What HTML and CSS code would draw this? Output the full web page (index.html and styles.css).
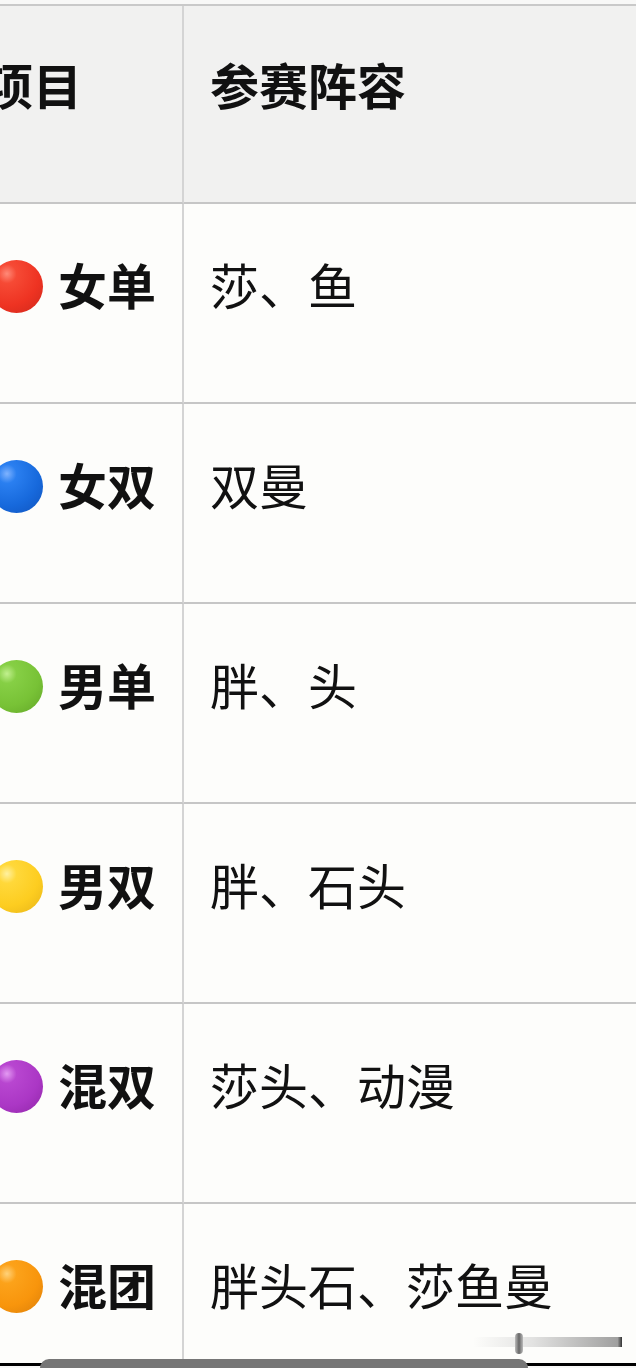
FILE: index.html
```html
<!DOCTYPE html>
<html lang="zh-CN">
<head>
<meta charset="utf-8">
<title>参赛阵容</title>
<link rel="stylesheet" href="styles.css">
</head>
<body>
<div class="page">
  <div class="table">
    <div class="cell head left"><span class="label">项目</span></div>
    <div class="cell head right"><span class="label">参赛阵容</span></div>

    <div class="cell left"><div class="cat"><span class="dot red"></span><span class="name">女单</span></div></div>
    <div class="cell right"><span class="value">莎、鱼</span></div>

    <div class="cell left"><div class="cat"><span class="dot blue"></span><span class="name">女双</span></div></div>
    <div class="cell right"><span class="value">双曼</span></div>

    <div class="cell left"><div class="cat"><span class="dot green"></span><span class="name">男单</span></div></div>
    <div class="cell right"><span class="value">胖、头</span></div>

    <div class="cell left"><div class="cat"><span class="dot yellow"></span><span class="name">男双</span></div></div>
    <div class="cell right"><span class="value">胖、石头</span></div>

    <div class="cell left"><div class="cat"><span class="dot purple"></span><span class="name">混双</span></div></div>
    <div class="cell right"><span class="value">莎头、动漫</span></div>

    <div class="cell left last"><div class="cat"><span class="dot orange"></span><span class="name">混团</span></div></div>
    <div class="cell right last"><span class="value">胖头石、莎鱼曼</span></div>
  </div>
  <div class="sysbar"></div>
  <div class="handle"></div>
  <div class="watermark"><span class="mark"></span></div>
</div>
</body>
</html>
```

FILE: styles.css
```css
html, body {
  margin: 0;
  padding: 0;
  background: #f8f8f7;
}

.page {
  position: relative;
  width: 636px;
  height: 1368px;
  overflow: hidden;
  padding-top: 4px;
  box-sizing: border-box;
  font-family: "Noto Sans CJK SC", "Noto Sans", sans-serif;
  color: #111;
}

.table {
  display: grid;
  grid-template-columns: 232px 1fr;
  margin-left: -48px;
  border-top: 2px solid #c9c9c9;
}

.cell {
  height: 200px;
  box-sizing: border-box;
  border-bottom: 2px solid #c6c6c6;
  background: #fdfdfb;
  padding-top: 55px;
  font-size: 49px;
  line-height: 50px;
  white-space: nowrap;
}

.cell.head {
  height: 198px;
  background: #f1f1f0;
  font-weight: 700;
  padding-top: 53px;
}

.cell.left {
  border-right: 2px solid #d4d4d4;
}

.head.left {
  padding-left: 32px;
}

.cell.right {
  padding-left: 26px;
}

.cell.last {
  height: 159px;
  border-bottom: none;
}

.cat {
  display: flex;
  align-items: center;
  height: 50px;
  padding-left: 38px;
}

.name {
  font-weight: 700;
  margin-left: 15px;
}

.value {
  font-weight: 400;
}

.dot {
  flex: none;
  width: 53px;
  height: 53px;
  border-radius: 50%;
  margin-top: 4px;
  box-sizing: border-box;
}

.dot.red {
  background: radial-gradient(circle at 32% 26%, #ff8a78 0, #f64a35 18%, #ee3322 60%, #d42a1c 92%, #c2261a 100%);
}
.dot.blue {
  background: radial-gradient(circle at 32% 26%, #7fb3ff 0, #2a7ff0 18%, #1769dc 60%, #1157c2 92%, #0e4da9 100%);
}
.dot.green {
  background: radial-gradient(circle at 32% 26%, #c2f08f 0, #86cf45 18%, #78c236 60%, #66ab2a 92%, #5a9a25 100%);
}
.dot.yellow {
  background: radial-gradient(circle at 32% 26%, #fff1a0 0, #ffd83a 18%, #fdcd20 60%, #eab81a 92%, #d9a715 100%);
}
.dot.purple {
  background: radial-gradient(circle at 32% 26%, #e39af2 0, #b846d0 18%, #ab37c5 60%, #9529ad 92%, #84219a 100%);
}
.dot.orange {
  background: radial-gradient(circle at 32% 26%, #ffd27a 0, #fca21a 18%, #f8950c 60%, #e0820a 92%, #cc7408 100%);
}

.sysbar {
  height: 3px;
  background: #000;
}

.handle {
  position: absolute;
  left: 40px;
  bottom: 0;
  width: 488px;
  height: 9px;
  background: #767676;
  border-radius: 9px 9px 0 0;
}

.watermark {
  position: absolute;
  right: 14px;
  bottom: 21px;
  width: 149px;
  height: 10px;
  background: linear-gradient(to right, rgba(200,200,200,0) 0, rgba(200,200,200,0.5) 40%, rgba(120,120,120,0.7) 97%, #333 100%);
}

.mark {
  position: absolute;
  left: 42px;
  top: -4px;
  width: 8px;
  height: 21px;
  border-radius: 4px;
  background: linear-gradient(to right, #bbb, #666, #bbb);
}
```
